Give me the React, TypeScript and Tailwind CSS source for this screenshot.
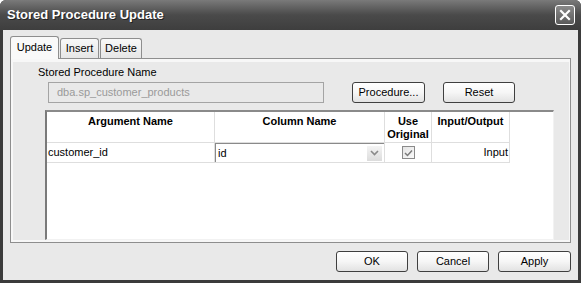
import React from "react";

const F = { fontFamily: '"Liberation Sans", Arial, sans-serif' };

function Btn({ label, w }: { label: string; w: string }) {
  return (
    <div
      className={`${w} h-[21px] flex items-center justify-center rounded-[3px] border border-[#3f3f3f] bg-gradient-to-b from-[#ffffff] via-[#f6f6f6] to-[#e2e2e2] text-[11px] text-black`}
    >
      {label}
    </div>
  );
}

export default function App() {
  return (
    <div
      className="w-[581px] h-[283px] bg-[#3b3b3b] flex flex-col rounded-t-[6px] overflow-hidden"
      style={F}
    >
      {/* title bar */}
      <div className="h-[30px] shrink-0 flex items-center justify-between pl-[7px] pr-[6px] bg-gradient-to-b from-[#7a7a7a] via-[#4a4a4a] to-[#3e3e3e]">
        <span className="text-[13px] font-bold text-white [text-shadow:1px_1px_0_#222]">
          Stored Procedure Update
        </span>
        <div className="w-[20px] h-[20px] rounded-[3px] border border-white bg-gradient-to-b from-[#8a8a8a] to-[#5a5a5a] flex items-center justify-center">
          <svg width="12" height="12" viewBox="0 0 12 12">
            <path d="M2 2 L10 10 M10 2 L2 10" stroke="white" strokeWidth="2.2" strokeLinecap="square" />
          </svg>
        </div>
      </div>

      {/* body */}
      <div className="flex-1 mx-[3px] mb-[3px] bg-[#e9e9e9] flex flex-col pl-[7px] pr-[7px] pt-[6px]">
        {/* tabs */}
        <div className="h-[22px] flex items-end relative z-10">
          <div className="w-[49px] h-[23px] -mb-[1px] border border-b-0 border-[#8e8e8e] rounded-t-[3px] bg-[#f9f9f9] flex items-center justify-center text-[11px] text-black pb-[1px]">
            Update
          </div>
          <div className="w-[39px] h-[20px] ml-[1px] border border-b-0 border-[#8e8e8e] rounded-t-[3px] bg-gradient-to-b from-[#f8f8f8] to-[#e6e6e6] flex items-center justify-center text-[11px] text-black">
            Insert
          </div>
          <div className="w-[42px] h-[20px] ml-[1px] border border-b-0 border-[#8e8e8e] rounded-t-[3px] bg-gradient-to-b from-[#f8f8f8] to-[#e6e6e6] flex items-center justify-center text-[11px] text-black">
            Delete
          </div>
        </div>

        {/* panel */}
        <div className="h-[185px] border border-[#8e8e8e] bg-[#f7f7f7] pt-[3px] pl-[2px] pr-[1px] pb-[2px] flex">
          <div className="flex-1 bg-[#e9e9e9] flex flex-col pl-[32px] pr-[15px]">
            <div className="pt-[4px] pl-[-7px] text-[11px] leading-[13px] text-black -ml-[7px]">
              Stored Procedure Name
            </div>
            <div className="mt-[3px] flex items-center">
              <div className="ml-[3px] w-[276px] h-[21px] border border-[#a4a4a4] bg-[#e9e9e9] flex items-center pl-[8px] text-[11px] text-[#9a9a9a]">
                dba.sp_customer_products
              </div>
              <div className="ml-[28px]">
                <Btn label="Procedure..." w="w-[73px]" />
              </div>
              <div className="ml-[18px]">
                <Btn label="Reset" w="w-[72px]" />
              </div>
            </div>

            {/* table */}
            <div className="mt-[7px] flex-1 bg-white border-t-2 border-l-2 border-t-[#8a8a8a] border-l-[#7a7a7a] border-r border-b border-r-[#f2f2f2] border-b-[#f2f2f2]">
              <div className="flex w-[463px] h-[31px] border-b border-[#dedede] text-[11px] font-bold text-black leading-[13px]">
                <div className="w-[168px] border-r border-[#dedede] text-center pt-[3px]">Argument Name</div>
                <div className="w-[170px] border-r border-[#dedede] text-center pt-[3px]">Column Name</div>
                <div className="w-[47px] border-r border-[#dedede] text-center pt-[3px]">
                  Use
                  <br />
                  Original
                </div>
                <div className="w-[78px] border-r border-[#dedede] text-center pt-[3px]">Input/Output</div>
              </div>
              <div className="flex w-[463px] h-[20px] border-b border-[#dedede] text-[11px] text-black">
                <div className="w-[168px] border-r border-[#dedede] flex items-center pl-[1px]">customer_id</div>
                <div className="w-[170px] border-r border-[#dedede] flex">
                  <div className="flex-1 border-t border-l border-[#8a8a8a] flex items-center justify-between pl-[2px] pr-[2px]">
                    <span>id</span>
                    <div className="w-[15px] h-[15px] bg-gradient-to-b from-[#f4f4f4] to-[#dcdcdc] flex items-center justify-center">
                      <svg width="9" height="6" viewBox="0 0 9 6">
                        <path d="M1 1 L4.5 4.5 L8 1" stroke="#8a8a8a" strokeWidth="1.6" fill="none" />
                      </svg>
                    </div>
                  </div>
                </div>
                <div className="w-[47px] border-r border-[#dedede] flex items-center justify-center">
                  <div className="w-[13px] h-[13px] border border-[#8a8a8a] bg-gradient-to-br from-[#e4e4e4] to-[#fafafa] flex items-center justify-center">
                    <svg width="9" height="8" viewBox="0 0 9 8">
                      <path d="M1 4 L3.5 6.5 L8 1.5" stroke="#7a7a7a" strokeWidth="1.5" fill="none" />
                    </svg>
                  </div>
                </div>
                <div className="w-[78px] border-r border-[#dedede] flex items-center justify-end pr-[1px]">Input</div>
              </div>
            </div>
          </div>
        </div>

        {/* footer */}
        <div className="flex justify-end gap-[9px] pt-[8px]">
          <Btn label="OK" w="w-[72px]" />
          <Btn label="Cancel" w="w-[72px]" />
          <Btn label="Apply" w="w-[73px]" />
        </div>
      </div>
    </div>
  );
}
